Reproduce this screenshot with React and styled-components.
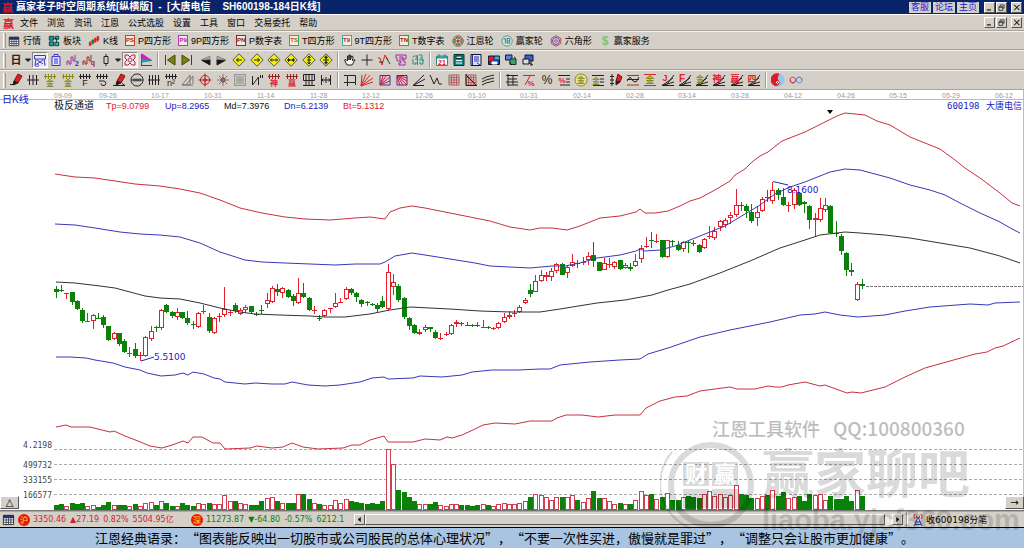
import React from 'react';
import styled, { createGlobalStyle } from 'styled-components';

const CJK = '"Noto Sans CJK SC", sans-serif';
const FACE = '#d4d0c8';
const RED = '#e0202c';
const GREEN = '#0a820a';
const BLUE = '#2222c0';
const DARK = '#222';
const OLIVE = '#8c8c10';
const GREY = '#777';

const GlobalStyle = createGlobalStyle`
  * {
    box-sizing: border-box;
  }

  body {
    margin: 0;
    background: #fff;
    font-family: "Liberation Sans", ${CJK};
    font-size: 9px;
    color: #000;
  }

  button {
    padding: 0;
    border: 0;
    background: none;
    color: inherit;
    font: inherit;
  }

  svg {
    flex: none;
  }
`;

const Window = styled.div`
  position: relative;
  min-height: 100vh;
  display: flex;
  flex-direction: column;
  overflow: hidden;
`;

const TitleBar = styled.header`
  display: flex;
  align-items: center;
  height: 14px;
  padding: 0 2px;
  background: #0a246a;
  color: #fff;
`;

const Title = styled.h1`
  display: flex;
  flex: 1;
  gap: 12px;
  margin: 0;
  padding-left: 3px;
  font-size: 10px;
  line-height: 14px;
  white-space: pre;
`;

const Brand = styled.span`
  color: #e01020;
  font: bold 11px/14px ${CJK};
`;

const TitleLinks = styled.nav`
  display: flex;
  gap: 2px;
  margin-right: 5px;
`;

const TitleLink = styled.a`
  padding: 0 2px;
  background: ${FACE};
  color: #1818d0;
  font-size: 9px;
  line-height: 11px;
  text-decoration: none;
`;

const Controls = styled.div`
  display: flex;
  gap: 1px;

  button:last-child {
    margin-left: 3px;
  }
`;

const Raised = styled.button`
  display: flex;
  align-items: center;
  justify-content: center;
  width: ${p => p.$w || 11}px;
  height: ${p => p.$h || 11}px;
  border: 1px solid;
  border-color: #fff #555 #555 #fff;
  background: ${FACE};
  color: #000;
`;

const MenuBar = styled.nav`
  display: flex;
  align-items: center;
  height: 17px;
  padding: 0 2px 0 3px;
  border-top: 1px solid #fff;
  border-bottom: 1px solid #a8a49c;
  background: ${FACE};
`;

const MenuList = styled.div`
  display: flex;
  flex: 1;
  gap: 9px;
  padding-left: 6px;
`;

const MenuItem = styled.button`
  line-height: 14px;
`;

const Toolbar = styled.div`
  display: flex;
  align-items: center;
  height: ${p => p.$h || 20}px;
  padding-left: 3px;
  border-top: 1px solid #f4f2ee;
  border-bottom: 1px solid #a8a49c;
  background: ${FACE};
`;

const Grip = styled.span`
  flex: none;
  width: 3px;
  height: 15px;
  margin-right: 2px;
  border-left: 1px solid #fff;
  border-right: 1px solid #999;
`;

const Divider = styled.span`
  flex: none;
  width: 2px;
  height: 16px;
  margin: 0 3px;
  border-left: 1px solid #999;
  border-right: 1px solid #fff;
`;

const LabelTools = styled.div`
  display: flex;
  gap: 7px;
`;

const LabelTool = styled.button`
  display: flex;
  align-items: center;
  gap: 3px;
  white-space: nowrap;
`;

const Badge = styled.span`
  width: 10px;
  height: 11px;
  border: 1px solid ${p => p.$edge};
  background: #f4ece0;
  color: ${p => p.$ink};
  font: bold 6px/9px "Liberation Sans", sans-serif;
  text-align: center;
`;

const IconGroup = styled.div`
  display: flex;
  align-items: center;
  justify-content: space-between;
  width: ${p => p.$w}px;
`;

const IconButton = styled.button`
  display: flex;
  align-items: center;
  justify-content: center;
  width: ${p => (p.$narrow ? 7 : 16)}px;
  height: 16px;
  border: 1px solid;
  border-color: ${p => (p.$pressed ? '#888 #fff #fff #888' : 'transparent')};
  background: ${p => (p.$pressed ? '#eceaf2' : 'none')};
`;

const ChartArea = styled.main`
  position: relative;
  border-bottom: 1px solid #777;
  background: #fff;

  svg {
    display: block;
    width: 100%;
  }
`;

const CornerButton = styled(Raised)`
  position: absolute;
  bottom: 1px;
  left: ${p => (p.$right ? 'auto' : 0)};
  right: ${p => (p.$right ? 0 : 'auto')};
  font: 10px/11px "DejaVu Sans", sans-serif;
`;

const StatusBar = styled.div`
  display: flex;
  align-items: center;
  height: 16px;
  border-top: 1px solid #aaa;
  background: ${FACE};
`;

const Quotes = styled.div`
  display: flex;
  flex: none;
  align-items: center;
  gap: 3px;
  width: 354px;
  padding-left: 2px;
  overflow: hidden;
  font: 8px/14px "DejaVu Sans", ${CJK};
  white-space: nowrap;
`;

const Market = styled.span`
  width: 12px;
  height: 12px;
  flex: none;
  border-radius: 50%;
  background: #e81808;
  color: #ffe020;
  font: 8px/12px ${CJK};
  text-align: center;
`;

const Figures = styled.span`
  display: flex;
  flex: none;
  gap: 4px;
  width: ${p => p.$w}px;
  color: ${p => p.$ink};
`;

const ScrollBar = styled.div`
  display: flex;
  flex: 1;
  align-items: center;
  height: 11px;
  background: #ebe9e4;
`;

const Thumb = styled.div`
  flex: 1;
  height: 11px;
  margin-right: 7px;
  border: 1px solid;
  border-color: #fff #555 #555 #fff;
  background: ${FACE};
`;

const Feed = styled.div`
  display: flex;
  flex: none;
  align-items: center;
  gap: 1px;
  width: 113px;
  font: 9px/14px "DejaVu Sans", ${CJK};
`;

const Motto = styled.footer`
  flex: 1;
  min-height: 20px;
  padding-left: 95px;
  border-top: 1px solid #000;
  background: #a8c4e0;
  font: 13px/20px ${CJK};
  white-space: nowrap;
  text-spacing-trim: space-all;
`;

const Watermark = styled.svg`
  position: absolute;
  right: 0;
  bottom: 0;
  pointer-events: none;
`;

// ticks along the upper edge, shared by the ruler tools
const TICKS = 'M1 3.5H13M2.5 1V6M5.5 1V6M8.5 1V6M11.5 1V6';
const FAN = 'M1 12.5H13M1 12.5L13 9M1 12.5L12 5M5 12.5L13 2';
const RAYS = 'M1 13L2 2M1 13L6 1M1 13L10 2M1 13L13 5M1 13L13 9';
const GRID = 'M2 2H12V12H2ZM2 4.5H12M2 7H12M2 9.5H12M4.5 2V12M7 2V12M9.5 2V12';
const DIAMOND = ['#555', 'M7 .8L13.2 7L7 13.2L.8 7Z', '#f2ee10'];
const PEN = [
  ['#801010', 'M5 8L9 1L13 3L9 10Z', '#e02020'],
  [DARK, 'M5 8L9 10L4 12Z', '#111'],
];
const txt = (t, ink, x = 7, y = 13, size = 8, weight = 'bold') => ({ t, ink, x, y, size, weight });

const ICONS = {
  table: [['#223', 'M1.5 2.5H12.5V12.5H1.5Z', '#fff'], ['#223', 'M2 3H12V5H2Z', '#2438a0'], ['#445', 'M2 7.5H12M2 10H12M4.5 5V12M7 5V12M9.5 5V12']],
  blocks: [['#033', 'M1.5 1.5H6.5V6H1.5ZM1.5 8H6.5V12.5H1.5Z', '#18a0a0'], ['#033', 'M8.5 1.5H12.5V5H8.5ZM8 8.5H12.5V12.5H8Z', '#20b8b0'], ['#033', 'M6.5 4H10V8.5']],
  kline: [[RED, 'M2.5 7V13M1.5 9H3.5V12H1.5Z', RED], ['#0a8a20', 'M5.5 5V11M4.5 6H6.5V10H4.5Z', '#0a8a20'], [RED, 'M8.5 3V9M7.5 4H9.5V8H7.5ZM11.5 1V8M10.5 2H12.5V6H10.5Z', RED]],
  wheel: [['#703030', 'M7 1A6 6 0 1 0 7.1 1ZM7 3.5A3.5 3.5 0 1 0 7.1 3.5Z', '#d8e8d0'], ['#207030', 'M7 2.3A4.7 4.7 0 1 0 7.1 2.3Z'], [RED, 'M7 5.5A1.5 1.5 0 1 0 7.1 5.5Z', RED]],
  winner: [['#3a8a70', 'M7 1A6 6 0 1 0 7.1 1Z', '#d0e8e0'], ['#2a7090', 'M3 5L5 4V10M7 4H10V9.5H7ZM7 7H10']],
  hexagon: [['#c03040', 'M7 .8L12.5 4V10L7 13.2L1.5 10V4Z'], ['#3030c0', 'M7 3A4 4 0 1 0 7.1 3Z', '#ccd'], [RED, 'M7 5.5A1.5 1.5 0 1 0 7.1 5.5Z']],
  dollar: [txt('$', '#70c878', 7, 12, 14)],
  day: [txt('日', DARK, 7, 11, 11)],
  down: [[DARK, 'M4.5 6H9.5L7 8.5Z', DARK]],
  net: [['#3838c8', 'M1.5 2.5H12.5V6H1.5ZM3 6L2 12.5M11 6L12 12.5M4 11L10 7M4 7L10 11M4 11A1.5 1.5 0 1 0 4.1 11']],
  clip: [['#3838c8', 'M3 3.5H11V12.5H3ZM5 3.5V1.5H9V3.5M5 6H9M5 8H9M5 10H9', '#e4e4fa']],
  wave1: [['#9830a0', 'M1 12V8H3V11H5V4H7V8H9V2'], txt('2', '#3030b0', 11, 13, 7)],
  wave2: [['#a02828', 'M1 12V8H3V11H5V4H7V8H9V2'], txt('q', '#a02828', 11, 12, 7)],
  candle: [[DARK, 'M7 1V3M7 11V13M5 3.5H9V10.5H5Z']],
  flower: [['#c02020', 'M2 2H5L7 4L9 2H12V5L10 7L12 9V12H9L7 10L5 12H2V9L4 7L2 5ZM5 7A2 2 0 1 0 5 6.9']],
  flag: [['#2040c0', 'M2.5 1V13M2.5 12.5H13'], ['#d020c0', 'M3 1L12 7H3Z', '#d020c0'], ['#2090b0', 'M3 6L13 7.5L3 9Z', '#20a0b0']],
  first: [['#454500', 'M2.5 2V12'], ['#454500', 'M12 2V12L4.5 7Z', '#7c8010']],
  last: [['#454500', 'M11.5 2V12'], ['#454500', 'M2 2V12L9.5 7Z', '#7c8010']],
  prev: [['#888', 'M12 3V8L3 7Z', '#aaa'], [DARK, 'M4 7.5L12 12V7Z', '#111']],
  next: [['#888', 'M2 3V8L11 7Z', '#aaa'], [DARK, 'M10 7.5L2 12V7Z', '#111']],
  dLeft: [DIAMOND, [DARK, 'M10 7H4.5M6.5 5L4.5 7L6.5 9']],
  dRight: [DIAMOND, [DARK, 'M4 7H9.5M7.5 5L9.5 7L7.5 9']],
  dWide: [DIAMOND, [DARK, 'M3.5 7H10.5M5 5.5L3.5 7L5 8.5M9 5.5L10.5 7L9 8.5']],
  dNarrow: [DIAMOND, [DARK, 'M3 7H11M4.5 5.5L6 7L4.5 8.5ZM9.5 5.5L8 7L9.5 8.5Z', DARK]],
  dTall: [DIAMOND, [DARK, 'M7 3V11M5.5 5L7 3L8.5 5M5.5 9L7 11L8.5 9M5 7H9']],
  dShort: [DIAMOND, [DARK, 'M7 2.5V11.5M5.500 4L7 5.500L8.500 4ZM5.500 10L7 8.500L8.500 10ZM4 7H10', DARK]],
  hand: [[DARK, 'M4 12L1.5 7L3 6.5L4.5 8V3L6 3V7V2H7.5V7L8.5 3L10 3.5L9.5 8L11 6.5L12 7L9 12Z', '#f4f4f0']],
  cross: [[DARK, 'M7 1.5V12.5M1.5 7H12.5']],
  zigzag: [[RED, 'M1 5H3L5 12L8 2L11 7'], ['#333', 'M9 4L13 11M2 9H6']],
  tree: [['#a028a0', 'M2 2H12V6H9V8H11V12H5V10H7V8H3V5H2ZM5 4H9V6H5']],
  brain: [['#209088', 'M6.5 2V12M3 3H6V6H4M2 6V11H5V9M8 2H11V5H9M8 7H12V11H9V9M1.5 4.5L3 3M11 5L12.5 8']],
  calendar: [['#2a8a90', 'M1.5 3.5H12.5V12.5H1.5Z', '#fff'], ['#2a8a90', 'M2 3H12V5H2ZM4 1V4M10 1V4', '#50b0b0'], txt('21', RED, 7, 12, 7)],
  calc: [['#033', 'M2 1.5H12V12.5H2Z', '#108890'], ['#033', 'M4 3H10V5.5H4Z', '#c8f0e0'], ['#fff', 'M4 7.5H10M4 10H10']],
  book: [['#113', 'M2 1.5H12V12.5H2Z', '#dfe0ff'], ['#2830a0', 'M3.5 2V12M5 4H10M5 6H10M5 8H10M8 10L11 12']],
  disk: [['#113', 'M1.5 3H12.5V11.5H1.5Z', '#1840b0'], ['#c01818', 'M2 4H6V8H2Z', '#e02020'], ['#18a0a0', 'M8 4H12V6H8Z', '#40d0d0'], ['#fff', 'M5 9H10V11H5Z', '#fff']],
  copy: [['#113', 'M1.5 2H8V7H1.5Z', '#6080e0'], ['#132', 'M6 6H12V11.5H6Z', '#40a070'], ['#113', 'M5 9L8 12M10 4L12 5.5']],
  screens: [['#113', 'M4 2H12V8H4Z', '#4060c0'], ['#113', 'M2 6H8V11H2Z', '#ddd'], [DARK, 'M8 10L12 12M10 8V13', DARK]],
  pen: [...PEN, [DARK, 'M1 11.5H5']],
  tally: [[DARK, 'M1 7H13M3.5 2V12M7 2V12M10.5 2V12']],
  gold1: [[OLIVE, TICKS], txt('金', OLIVE)],
  rulerF: [[DARK, TICKS], txt('F', DARK, 7, 13, 9, 'normal')],
  spiral: [[DARK, TICKS], [DARK, 'M4 8H9A2.3 2.3 0 0 1 8 12.5A2 2 0 0 1 6 10.5']],
  penLine: [...PEN, [DARK, 'M1 12.5H13M10 10.5L13 12.5']],
  dial: [[DARK, 'M7 1A6 6 0 1 0 7.1 1ZM1 7H13M4 5.5V8.5M6 5.5V8.5M8 5.5V8.5M10 5.5V8.5']],
  tally4: [[DARK, 'M1 7H13M2.5 2V12M5.5 2V12M8.5 2V12M11.5 2V12']],
  square: [[DARK, TICKS], txt('n²', DARK, 7, 13, 9, 'normal')],
  sail: [[GREY, 'M1 12L9 2V12ZM5 12L12 3V11M1 12H12']],
  target: [['#b02020', 'M7 2.5A4.5 4.5 0 1 0 7.1 2.5ZM7 .5V13.5M.5 7H13.5'], [RED, 'M7 5.5A1.5 1.5 0 1 0 7.1 5.5Z', RED]],
  star: [[GREY, 'M7 1V13M1 7H13M3 3L11 11M11 3L3 11'], ['#a02020', 'M7 5A2 2 0 1 0 7.1 5Z']],
  web: [['#999', 'M1.5 1.5H12.5V12.5H1.5ZM4 4H10V10H4ZM1.5 1.5L12.5 12.5M12.5 1.5L1.5 12.5M7 1V13M1 7H13']],
  quote: [[DARK, 'M2.5 3V12L8.5 4V12M10.5 2V5M12.5 2V5']],
  spirit: [['#a02020', TICKS], txt('神', RED)],
  win: [['#a02020', TICKS], txt('赢', RED)],
  ladder: [[DARK, 'M1.5 1.5H12.5V7.5H1.5ZM1 12.5H13M4 1.5V12M7 1.5V12M10 1.5V12']],
  gap: [[DARK, 'M2.5 2V12M11.5 2V12M7 4V10M3 7H11M4.5 5.5L3 7L4.5 8.5M9.5 5.5L11 7L9.5 8.5']],
  frame: [[DARK, 'M4.5 2.5H12.5V9.5H4.5ZM1 2.5H4M1 9.5H4.5V13M12.5 10V12']],
  rays: [[RED, RAYS]],
  raysBox: [['#4030a0', 'M2 2.5H12V12H2Z', '#e8c8d8'], ['#c02040', 'M2 12L5 3M2 12L8 3M2 12L12 4M2 12L12 8']],
  raysFill: [['#502080', 'M2 2.5H12V12H2Z', '#e8d0e0'], ['#c01840', 'M2 2.5L12 12M2 2.5L12 8M2 2.5L8 12M2 4L5 12M5 3L12 5']],
  fan: [[DARK, 'M1 12.5L12 2M1 12.5L13 6M1 12.5H12']],
  vee: [[DARK, 'M1 2L5 11L8 5L10 11H13']],
  gridRed: [['#b06060', GRID]],
  gridDark: [['#b06060', GRID], [DARK, 'M2 1V12.5H13M2 2L12 12']],
  slopes: [[DARK, 'M1 6L5 4L13 2M1 9L5 7L13 5M1 12L5 10L13 8']],
  steps: [[DARK, 'M3 1V13M1 2.5H13M3 6H12M1 9H13M3 12H13M8 2V12']],
  seven: [[RED, 'M1 2.5H13M3 12L8 3'], txt('%', RED, 9, 13, 8)],
  percent: [txt('%', DARK, 7, 11, 12, 'normal')],
  percentRows: [[DARK, 'M1 2.5H13M9 6H13M9 9H13M3 12H13'], txt('%', RED, 5, 10, 8)],
  goldRound: [[OLIVE, 'M7 1A6 6 0 1 0 7.1 1Z', '#e4dfb0'], txt('金', OLIVE, 7, 10, 8)],
  goldRows: [[DARK, 'M1 2.5H13M9 6H13M9 9H13M2 12.5H13'], txt('金', OLIVE, 5, 11, 8)],
  penRows: [[DARK, 'M3 1V13M1 3.5H5M1 7H5M1 10.5H5'], ['#801010', 'M7 8L9 1L13 4L11 9Z', '#e02020'], [DARK, 'M7 8L11 9L7 12Z', DARK]],
  waveBox: [['#b03030', 'M1 2.5H13M1 12H13'], [DARK, 'M1 8L4 4L7 8L10 9L13 4M1 6.5H13']],
  goldLines: [[RED, 'M1 1.5H13M1 12.5H13'], txt('金', OLIVE, 7, 10, 9)],
  jFan: [[DARK, FAN], txt('J', RED, 4, 8, 9)],
  fFan: [[DARK, FAN], txt('F', RED, 4, 9, 10)],
  goldFan: [[DARK, FAN], txt('金', OLIVE, 5, 9, 8)],
  spiritFan: [[DARK, FAN], txt('神', RED, 5, 9, 9)],
  winFan: [[DARK, FAN], txt('赢', RED, 5, 9, 9)],
  fourFan: [[DARK, FAN], txt('四', RED, 5, 9, 9)],
  taiji: [['#9cc4f0', 'M7 1A6 6 0 1 0 7.1 1Z', '#9cc4f0'], [RED, 'M8 1A6 6 0 0 0 4 12.5C7 13 9 11 8 8.5C7 7 5 6 8 1Z', '#e01828'], ['#fff', 'M6.5 8.5A1 1 0 1 0 6.6 8.5Z']],
  infinity: [['#4a90c8', 'M7 7C9 3 13 3.500 13 7C13 10.500 9 11 7 7M7 6C9 3 12.500 3.500 12.500 7'], ['#d03048', 'M7 7C5 3 1 3.500 1 7C1 10.500 5 11 7 7M7 8C5 11 1.500 10.500 1.500 7']],
  antenna: [['#2838a0', 'M7 4L3 13M7 4L11 13M4.5 9H9.5M4 11.5H10'], [RED, 'M4 1Q1.500 4 4 6M10 1Q12.500 4 10 6M5.500 2.500V5M8.500 2.500V5']],
  minimize: [['#000', 'M3 10.500H9M3 11H9']],
  restore: [['#000', 'M5 3H11V8H9M5 3V5M3 6H9V11.500H3ZM3 6.500H9']],
  close: [['#000', 'M3 3L11 11M11 3L3 11M4 3L12 11M12 3L4 11']],
  left: [['#000', 'M9 3V11L4 7Z', '#000']],
  right: [['#000', 'M5 3V11L10 7Z', '#000']],
};

const Icon = ({ name, size = 14 }) => (
  <svg width={size} height={size} viewBox="0 0 14 14" aria-hidden="true">
    {ICONS[name].map((part, i) =>
      part.t ? (
        <text
          key={i}
          x={part.x}
          y={part.y}
          fill={part.ink}
          fontSize={part.size}
          fontWeight={part.weight}
          textAnchor="middle"
        >
          {part.t}
        </text>
      ) : (
        <path key={i} d={part[1]} stroke={part[0]} fill={part[2] || 'none'} />
      )
    )}
  </svg>
);

const MENUS = ['文件', '浏览', '资讯', '江恩', '公式选股', '设置', '工具', '窗口', '交易委托', '帮助'];

const VIEWS = [
  { label: '行情', icon: 'table' },
  { label: '板块', icon: 'blocks' },
  { label: 'K线', icon: 'kline' },
  { label: 'P四方形', badge: 'PS', edge: '#c04040', ink: '#b02020' },
  { label: '9P四方形', badge: 'P9', edge: '#c030c0', ink: '#b020b0' },
  { label: 'P数字表', badge: 'PN', edge: '#803030', ink: '#a01818' },
  { label: 'T四方形', badge: 'TS', edge: '#30b050', ink: '#c05030' },
  { label: '9T四方形', badge: 'T9', edge: '#30b0b0', ink: '#a03030' },
  { label: 'T数字表', badge: 'TN', edge: '#40a030', ink: '#a01818' },
  { label: '江恩轮', icon: 'wheel' },
  { label: '赢家轮', icon: 'winner' },
  { label: '六角形', icon: 'hexagon' },
  { label: '赢家服务', icon: 'dollar' },
];

const CHART_TOOLS = [
  { w: 146, icons: ['day', 'down', 'net', 'clip', 'wave1', 'wave2', 'candle', 'down', 'flower', 'flag'] },
  { w: 172, icons: ['first', 'last', 'prev', 'next', 'dLeft', 'dRight', 'dWide', 'dNarrow', 'dTall', 'dShort'] },
  { w: 84, icons: ['hand', 'cross', 'zigzag', 'tree', 'brain'] },
  { w: 102, icons: ['calendar', 'calc', 'book', 'disk', 'copy', 'screens'] },
];

const DRAW_TOOLS = [
  { w: 326, icons: ['pen', 'tally', 'gold1', 'gold1', 'rulerF', 'spiral', 'penLine', 'dial', 'tally4', 'square', 'sail', 'target', 'star', 'web', 'quote', 'spirit', 'win', 'ladder', 'gap'] },
  { w: 154, icons: ['frame', 'rays', 'raysBox', 'raysFill', 'fan', 'vee', 'gridRed', 'gridDark', 'slopes'] },
  { w: 258, icons: ['steps', 'seven', 'percent', 'percentRows', 'goldRound', 'goldRows', 'penRows', 'waveBox', 'goldLines', 'jFan', 'fFan', 'goldFan', 'spiritFan', 'winFan', 'fourFan'] },
  { w: 34, icons: ['taiji', 'infinity'] },
];

const PRESSED = ['net', 'flower'];

const ToolRow = ({ groups }) => (
  <Toolbar>
    <Grip />
    {groups.map((group, g) => (
      <React.Fragment key={g}>
        {g > 0 && <Divider />}
        <IconGroup $w={group.w}>
          {group.icons.map((name, i) => (
            <IconButton
              key={i}
              type="button"
              aria-label={name}
              $pressed={PRESSED.includes(name)}
              $narrow={name === 'down'}
            >
              <Icon name={name} />
            </IconButton>
          ))}
        </IconGroup>
      </React.Fragment>
    ))}
  </Toolbar>
);

const WindowControls = () => (
  <Controls>
    <Raised type="button" aria-label="最小化"><Icon name="minimize" size={9} /></Raised>
    <Raised type="button" aria-label="还原"><Icon name="restore" size={9} /></Raised>
    <Raised type="button" aria-label="关闭"><Icon name="close" size={9} /></Raised>
  </Controls>
);

const DATES = [
  '09-09', '09-26', '10-17', '10-31', '11-14', '11-28', '12-12', '12-26', '01-10', '01-31',
  '02-14', '02-28', '03-14', '03-28', '04-12', '04-26', '05-15', '05-29', '06-12',
];

// one candle per trading day: direction, high, body top, body bottom, low
const CANDLES = `
g286,289,292,298 g285,290,291,292 r293,293,294,299 g292,292,302,305 g300,301,309,310
g308,310,321,323 r313,321,322,322 r314,315,321,329 g313,318,319,319 g315,317,325,328
g326,326,340,341 r332,333,339,340 g333,333,344,346 g339,341,352,353 r347,353,354,357
g343,349,356,358 r352,355,356,361 r336,337,356,357 r326,331,339,341 g326,327,328,332
r309,310,328,330 g304,305,312,313 g311,312,316,318 r308,312,317,320 g312,312,318,319
g311,318,323,325 g321,324,325,329 r312,313,327,328 r305,311,312,314 g313,317,331,333
r317,318,333,334 r313,316,317,322 r287,309,315,317 r310,312,313,316 g303,305,311,313
r308,310,314,315 r305,307,310,313 g306,306,312,313 g312,314,315,316 g305,310,311,314
r293,300,304,308 r286,288,302,303 g284,289,292,296 r287,288,293,298 g289,290,297,298
g294,296,301,306 r278,293,303,304 g283,293,297,298 g297,298,310,311 r306,310,311,314
g315,318,319,321 r309,310,316,317 r308,308,309,313 r293,303,307,308 r298,302,303,303
r287,289,299,300 g288,289,293,295 g292,293,297,302 g299,300,304,307 g301,302,303,306
g303,304,305,306 g303,305,309,312 g296,301,307,308 r264,272,309,311 r274,282,287,295
g284,286,300,302 g297,298,317,319 g317,318,326,330 g324,325,333,334 r329,332,334,335
r325,327,330,332 g327,327,329,332 g330,332,338,339 r333,338,339,340 r332,334,335,336
r324,325,334,335 r320,322,324,327 g322,323,324,326 g322,325,326,326 g324,325,326,327
g322,325,326,327 r320,327,328,328 g326,327,328,329 r327,328,329,330 r322,323,328,329
r313,317,322,323 r311,315,317,319 r310,313,314,317 r305,307,312,313 r298,300,303,304
g284,290,294,297 r275,281,292,292 r270,275,281,282 r272,275,277,281 r268,271,277,281
r263,264,271,273 g263,264,275,275 r265,267,273,278 r254,262,266,267 g260,263,264,268
r257,262,263,265 r252,256,260,265 g242,255,261,267 g262,262,271,271 r258,263,270,270
r258,264,265,268 r261,262,267,269 g260,260,269,270 r263,265,268,269 g263,267,269,271
r254,261,266,267 r245,248,259,263 r237,246,247,248 g232,240,241,248 r234,241,242,243
g240,240,257,258 r240,240,257,258 g240,241,242,246 g241,245,250,251 r241,242,249,252
g241,242,243,253 g240,243,244,247 g244,245,252,254 r237,238,248,249 r226,236,237,239
r227,231,238,240 r220,221,227,231 r218,220,225,228 g240,243,244,246 g244,245,252,253
r238,239,248,249 r226,236,237,239 r227,231,238,240 r220,221,227,231 r218,220,225,228
`;

const candles = CANDLES.trim().split(/\s+/).slice(0, 121).map(toCandle);

// the run up to the high and the fall after it
const RECENT = `
g240,243,244,246 g244,245,252,253 r238,239,248,249
r226,236,237,239 r227,231,238,240 r220,221,227,231 r218,220,225,228 r212,215,218,224
r189,205,215,217 g202,205,206,211 g204,206,211,218 g204,212,221,223 r207,212,218,226
r197,199,211,212 g190,197,198,202 r182,190,201,204 g188,190,195,200 g188,197,205,206
r202,205,206,212 r188,190,205,209 g192,193,205,206 g201,202,204,213 g205,206,220,229
r213,218,220,236 r198,208,220,222 r198,205,210,212 g205,206,233,234 g221,233,234,237
g234,236,251,255 g252,253,270,276 g263,270,272,276 r282,284,300,301 g279,284,286,289
`;

function toCandle(item) {
  const [high, top, bottom, low] = item.slice(1).split(',').map(Number);
  return { up: item[0] === 'r', high, top, bottom, low };
}

candles.push(...RECENT.trim().split(/\s+/).map(toCandle));

const VOLUMES = [
  4, 5, 3, 6, 5, 6, 3, 4, 2, 4, 7, 4, 4, 4, 3, 5, 3, 6, 7, 4, 8, 6, 3, 3, 6, 4, 3, 6, 5, 6,
  5, 5, 14, 8, 8, 6, 5, 4, 4, 8, 11, 12, 8, 6, 6, 6, 15, 15, 10, 6, 5, 4, 4, 9, 6, 10, 8, 7, 6, 5,
  6, 5, 8, 60, 45, 19, 17, 12, 8, 5, 5, 5, 7, 4, 3, 5, 5, 4, 4, 3, 4, 5, 4, 3, 5, 6, 5, 5, 6, 8,
  12, 15, 14, 12, 9, 12, 12, 12, 14, 9, 7, 11, 18, 11, 11, 8, 5, 6, 5, 5, 9, 18, 14, 15, 10, 12, 16, 9, 9, 12,
  13, 12, 11, 15, 18, 13, 15, 12, 14, 24, 15, 14, 11, 11, 13, 14, 19, 13, 17, 11, 12, 13, 8, 15, 14, 15, 9, 13, 10, 10,
  13, 8, 19, 13,
];

const BANDS = [
  { ink: '#c83040', points: '55,174 75,177 95,178 115,181 135,184 160,186 180,189 200,193 220,200 240,208 262,213 285,217 305,219 330,220 355,218 370,217 385,219 390,212 400,208 412,206 425,208 440,211 460,215 490,221 510,227 530,230 540,228 552,228 567,230 580,226 590,222 600,218 620,216 636,212 640,209 645,213 655,213 668,211 680,206 690,201 700,198 715,190 730,181 735,175 745,169 752,162 760,156 768,152 782,141 805,132 825,122 837,116 845,113 865,115 877,121 890,125 910,137 925,143 940,149 955,160 965,168 980,178 1000,193 1012,203 1020,206' },
  { ink: '#3838b8', points: '55,224 75,225 95,228 120,232 140,234 160,235 180,237 200,243 220,252 245,260 262,262 285,263 310,264 335,265 355,264 380,264 385,262 395,256 412,253 425,255 450,259 475,263 490,266 510,267 530,268 552,266 565,266 580,263 597,258 620,255 636,251 640,249 645,251 660,250 675,246 690,240 710,232 725,226 745,214 760,205 775,194 790,187 805,182 820,176 830,172 845,169 860,170 875,174 890,178 910,185 930,190 945,195 960,203 980,213 1000,222 1012,229 1020,233' },
  { ink: '#333', points: '56,282 75,283 100,286 115,288 130,292 145,296 160,298 180,299 200,303 220,308 240,312 255,314 280,315 310,316 325,317 345,317 370,314 390,310 410,307 450,309 480,311 510,312 540,312 560,309 597,303 625,300 652,295 668,290 690,284 720,273 750,261 780,248 805,240 820,235 845,232 860,233 885,235 910,238 940,243 970,248 1000,256 1020,263' },
  { ink: '#3838b8', points: '56,357 70,357 86,358 95,360 113,363 125,367 140,370 147,373 161,376 175,375 183,373 188,375 193,372 204,374 214,378 220,379 225,382 245,384 255,383 272,384 285,384 292,382 308,385 325,386 340,385 360,382 372,378 384,377 388,379 413,378 420,376 442,377 462,375 472,372 492,370 518,370 540,369 550,369 560,365 590,362 620,360 640,359 648,354 668,348 700,337 730,330 770,322 800,315 815,314 825,312 840,315 858,317 885,315 905,311 930,307 970,304 988,305 995,303 1020,302' },
  { ink: '#c83040', points: '56,427 66,425 71,427 90,427 102,430 110,432 114,431 125,436 138,441 150,446 162,448 172,445 183,441 188,443 193,437 202,437 213,443 220,443 225,449 250,448 257,446 272,448 283,447 292,443 303,447 318,449 343,448 352,445 360,445 370,440 384,436 388,442 413,442 425,439 440,440 447,437 452,438 462,435 475,429 483,425 495,423 515,424 530,421 552,421 557,418 566,415 582,415 598,417 615,415 640,415 646,408 660,401 675,397 687,396 700,391 730,387 737,389 755,389 768,386 775,387 782,387 788,385 805,382 820,386 825,385 847,393 852,392 861,393 885,387 905,377 925,368 950,361 975,354 987,352 995,348 1003,346 1020,338' },
];

const LEVELS = [
  { y: 449, label: '4.2198' },
  { y: 464, label: '499732' },
  { y: 479, label: '333155' },
  { y: 494, label: '166577' },
];

const READINGS = [
  { x: 106, text: 'Tp=9.0799', ink: RED },
  { x: 165, text: 'Up=8.2965', ink: BLUE },
  { x: 224, text: 'Md=7.3976', ink: '#111' },
  { x: 284, text: 'Dn=6.2139', ink: BLUE },
  { x: 343, text: 'Bt=5.1312', ink: RED },
];

const STEP = 5.27;
const BASE = 509;
const dayX = i => Math.round(55.7 + i * STEP);

const Candle = ({ x, day }) => {
  const ink = day.up ? RED : GREEN;
  const height = day.bottom - day.top - 1;
  return (
    <g stroke={ink}>
      <path d={`M${x + 0.5} ${day.high}V${day.top}M${x + 0.5} ${day.bottom}V${day.low}`} />
      {height > 0 ? (
        <rect x={x - 1.5} y={day.top + 0.5} width="4" height={height} fill={day.up ? '#fff' : GREEN} />
      ) : (
        <path d={`M${x - 2} ${day.top + 0.5}H${x + 3}`} />
      )}
    </g>
  );
};

const Chart = () => (
  <svg viewBox="0 90 1024 420" role="img" aria-label="日K线">
    <path d="M0 99.5H1024M1023.5 90V510" stroke="#bbb" />
    <g fontSize="7" fill="#999">
      {DATES.map((date, i) => (
        <text key={date} x={i === 0 ? 54 : Math.round(46 + i * 52.7)} y="98">{date}</text>
      ))}
    </g>

    <text x="2" y="103" fontSize="10" fill={BLUE}>日K线</text>
    <text x="54" y="109" fontSize="10" fill="#111">极反通道</text>
    <g fontSize="9">
      {READINGS.map(item => (
        <text key={item.text} x={item.x} y="109" fill={item.ink}>{item.text}</text>
      ))}
    </g>
    <g fill={BLUE} fontSize="9" fontFamily={`"DejaVu Sans Mono", ${CJK}`}>
      <text x="947" y="109">600198</text>
      <text x="1022" y="109" textAnchor="end">大唐电信</text>
    </g>

    {LEVELS.map(level => (
      <g key={level.label}>
        <path d={`M54 ${level.y + 0.5}H1023`} stroke="#aaa" strokeDasharray="3 2" />
        <text
          x="52"
          y={level.y === 449 ? 448 : level.y + 4}
          fontSize="8"
          fontFamily='"DejaVu Sans Mono", monospace'
          textAnchor="end"
          fill="#444"
        >
          {level.label}
        </text>
      </g>
    ))}

    {VOLUMES.map((v, i) => (
      <rect
        key={i}
        x={dayX(i) - 1.5}
        y={BASE - v + 0.5}
        width="4"
        height={v}
        stroke={candles[i].up ? '#d04050' : GREEN}
        fill={candles[i].up ? '#fff' : GREEN}
      />
    ))}

    {candles.map((day, i) => (
      <Candle key={i} x={dayX(i)} day={day} />
    ))}

    {BANDS.map((band, i) => (
      <polyline key={i} points={band.points} fill="none" stroke={band.ink} />
    ))}

    <path d="M866 286.5H1023" stroke="#777" strokeDasharray="3 1" />
    <path d="M141 361L154 357M773 181.500L788 185" stroke={BLUE} fill="none" />
    <path d="M827 110H833L830 114Z" fill="#000" />
    <g fill={BLUE} fontSize="9" fontFamily='"DejaVu Sans", sans-serif'>
      <text x="154" y="360">5.5100</text>
      <text x="787" y="193">8.1600</text>
    </g>
  </svg>
);

const Mark = () => (
  <Watermark width="364" height="140" viewBox="660 408 364 140" aria-hidden="true">
    <g fontFamily={CJK} fontWeight="500" fill="#000" opacity="0.26">
      <text x="712" y="436" fontSize="18">江恩工具软件</text>
      <text x="833" y="436" fontSize="19">QQ:100800360</text>
    </g>
    <g fontFamily={CJK} fontWeight="bold" fill="#000" opacity="0.14">
      <text x="762" y="493" fontSize="52">赢家聊吧</text>
      <text x="762" y="530" fontSize="29" fontFamily='"Liberation Sans", sans-serif'>liaoba.yjcf360.com</text>
      <path d="M683 462H709V486H683ZM712 462H738V486H712ZM683 489H709V508H683ZM712 489H738V508H712Z" />
    </g>
    <g fontFamily={CJK} fontWeight="bold" fontSize="22" fill="#fff">
      <text x="685" y="482">财</text>
      <text x="714" y="482">赢</text>
    </g>
    <g fill="none" stroke="#000" opacity="0.14">
      <circle cx="711" cy="485" r="40" strokeWidth="6" />
      <path d="M672 452A48 48 0 0 0 690 528" strokeWidth="2" />
    </g>
  </Watermark>
);

const App = () => (
  <Window>
    <GlobalStyle />
    <TitleBar>
      <Brand>赢</Brand>
      <Title>
        <span>赢家老子时空周期系统[纵横版]  -  [大唐电信</span>
        <span>SH600198-184日K线]</span>
      </Title>
      <TitleLinks>
        <TitleLink href="#service">客服</TitleLink>
        <TitleLink href="#forum">论坛</TitleLink>
        <TitleLink href="#home">主页</TitleLink>
      </TitleLinks>
      <WindowControls />
    </TitleBar>

    <MenuBar>
      <Brand>赢</Brand>
      <MenuList>
        {MENUS.map(menu => (
          <MenuItem key={menu} type="button">{menu}</MenuItem>
        ))}
      </MenuList>
      <WindowControls />
    </MenuBar>

    <Toolbar $h={19}>
      <Grip />
      <LabelTools>
        {VIEWS.map(view => (
          <LabelTool key={view.label} type="button">
            {view.icon ? (
              <Icon name={view.icon} size={12} />
            ) : (
              <Badge $edge={view.edge} $ink={view.ink}>{view.badge}</Badge>
            )}
            {view.label}
          </LabelTool>
        ))}
      </LabelTools>
    </Toolbar>
    <ToolRow groups={CHART_TOOLS} />
    <ToolRow groups={DRAW_TOOLS} />

    <ChartArea>
      <Chart />
      <CornerButton type="button" aria-label="展开" $w={19} $h={13}>△</CornerButton>
      <CornerButton type="button" aria-label="右移" $w={19} $h={13} $right>→</CornerButton>
    </ChartArea>

    <StatusBar>
      <Quotes>
        <Icon name="table" size={13} />
        <Market>沪</Market>
        <Figures $ink="#d82030" $w={155}>
          <span>3350.46</span>
          <span>▲27.19</span>
          <span>0.82%</span>
          <span>5504.95亿</span>
        </Figures>
        <Market>深</Market>
        <Figures $ink={GREEN} $w={160}>
          <span>11273.87</span>
          <span>▼-64.80</span>
          <span>-0.57%</span>
          <span>6212.1</span>
        </Figures>
      </Quotes>
      <ScrollBar>
        <Raised type="button" aria-label="向左"><Icon name="left" size={7} /></Raised>
        <Thumb />
        <Raised type="button" aria-label="向右"><Icon name="right" size={7} /></Raised>
      </ScrollBar>
      <Divider />
      <Feed>
        <Icon name="antenna" />
        收600198分笔
      </Feed>
    </StatusBar>

    <Motto>
      江恩经典语录：“图表能反映出一切股市或公司股民的总体心理状况”，“不要一次性买进，傲慢就是罪过”，“调整只会让股市更加健康”。
    </Motto>
    <Mark />
  </Window>
);

export default App;
